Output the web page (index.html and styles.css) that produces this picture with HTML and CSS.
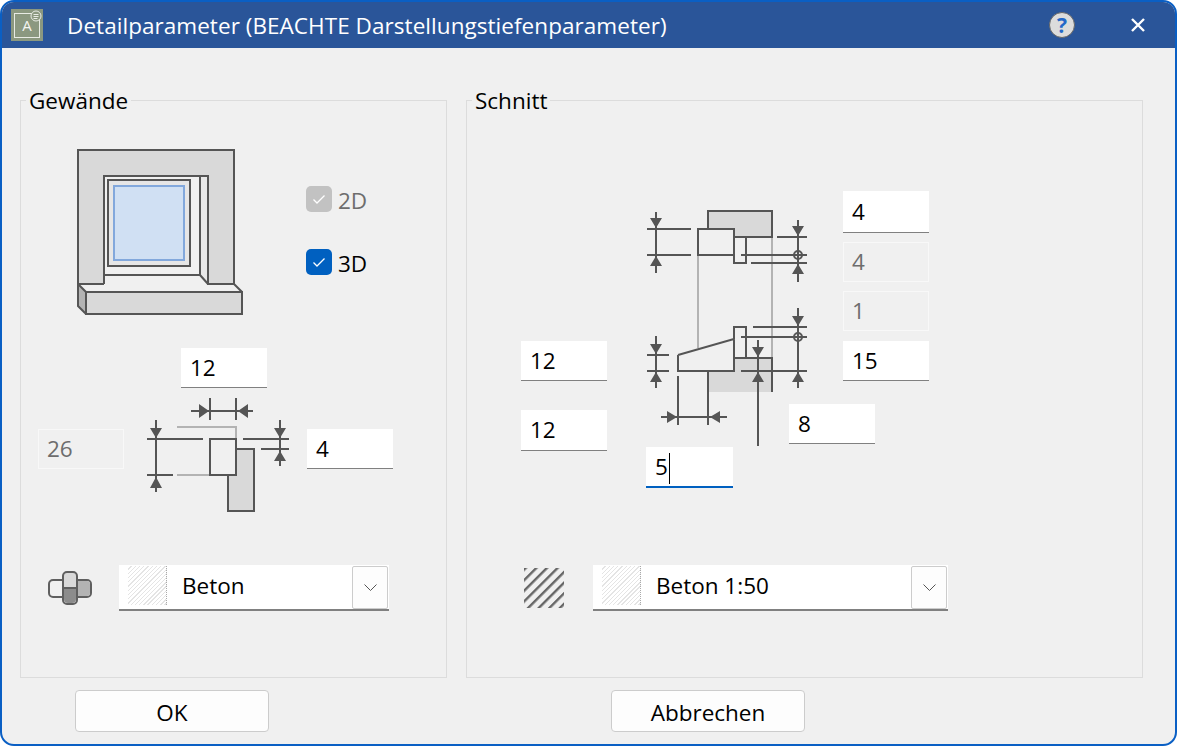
FILE: index.html
```html
<!DOCTYPE html>
<html lang="de">
<head>
    <meta charset="UTF-8">
    <meta name="viewport" content="width=device-width, initial-scale=1.0">
    <title>Detailparameter</title>
    <link rel="stylesheet" href="styles.css">
</head>
<body>
    <div class="window">
        <div class="titlebar">
            <div class="app-icon">
                <span class="app-letter">A</span>
                <svg class="app-badge" width="12" height="12" viewBox="0 0 12 12"><circle cx="6" cy="6" r="5" fill="#8b9880" stroke="#e8ebe4"/><path d="M3.5 4.5h5M3.5 6.5h5M3.5 8.500h4" stroke="#e8ebe4"/></svg>
            </div>
            <div class="title">Detailparameter (BEACHTE Darstellungstiefenparameter)</div>
            <div class="help"><span>?</span></div>
            <svg class="close" width="16" height="16" viewBox="0 0 16 16"><path d="M2 2 14 14M14 2 2 14" stroke="#fff" stroke-width="2.400"/></svg>
        </div>

        <div class="content">
            <div class="groups">
                <!-- Gewaende -->
                <div class="group group-left">
                    <div class="group-title">Gewände</div>

                    <div class="top-row">
                        <svg width="166" height="166" viewBox="77 149 166 166">
                            <path d="M78 150H234V284H78Z" fill="#d9d9d9"/>
                            <path d="M104 176H208V284H104Z" fill="#f0f0f0"/>
                            <path d="M200 176H208V284L200 275Z" fill="#e8e8e8"/>
                            <rect x="108" y="180" width="82" height="86" fill="#e6e6e6" stroke="#555" stroke-width="2"/>
                            <rect x="114" y="186" width="70" height="74" fill="#d0e0f3" stroke="#82a8dc" stroke-width="2"/>
                            <path d="M78 284H234L242 292H86Z" fill="#f0f0f0"/>
                            <g fill="none" stroke="#555" stroke-width="2">
                                <path d="M104 284V176H208V284H234V150H78V284H104"/>
                                <path d="M200 176V275L208 284M104 275H200"/>
                                <path d="M234 284 242 292H86"/>
                            </g>
                            <path d="M78 284 86 292V314L78 306Z" fill="#b3b3b3" stroke="#555" stroke-width="2"/>
                            <rect x="86" y="292" width="156" height="22" fill="#d9d9d9" stroke="#555" stroke-width="2"/>
                        </svg>
                        <div class="checks">
                            <div class="check disabled">
                                <span class="box"><svg width="14" height="14" viewBox="0 0 14 14"><path d="M1.500 7.500 5 11 12.500 3.500" fill="none" stroke="#fff" stroke-width="1.300"/></svg></span>
                                <span class="check-label">2D</span>
                            </div>
                            <div class="check">
                                <span class="box"><svg width="14" height="14" viewBox="0 0 14 14"><path d="M1.500 7.500 5 11 12.500 3.500" fill="none" stroke="#fff" stroke-width="1.300"/></svg></span>
                                <span class="check-label">3D</span>
                            </div>
                        </div>
                    </div>

                    <div class="dim-canvas left-canvas">
                        <svg class="dim-left" width="155" height="120" viewBox="140 395 155 120">
                            <g fill="none" stroke="#b3b3b3" stroke-width="2">
                                <path d="M177 427H236V439M177 475H210"/>
                            </g>
                            <rect x="228" y="449" width="26" height="62" fill="#d9d9d9" stroke="#555" stroke-width="2"/>
                            <rect x="210" y="439" width="26" height="36" fill="#f0f0f0" stroke="#555" stroke-width="2"/>
                            <g fill="none" stroke="#555" stroke-width="2">
                                <path d="M191 411H253M210 398V420M236 398V420"/>
                                <path d="M156 420V492M147 439H203M147 475H173"/>
                                <path d="M280 420V466M243 439H289M261 449H289"/>
                            </g>
                            <g fill="#555">
                                <path d="M199 404 209 411 199 418ZM248 404 238 411 248 418Z"/>
                                <path d="M150 428H162L156 438ZM150 488H162L156 477Z"/>
                                <path d="M274 428H286L280 438ZM274 461H286L280 451Z"/>
                            </g>
                        </svg>
                        <div class="field f-l1">12</div>
                        <div class="field disabled f-l2">26</div>
                        <div class="field f-l3">4</div>
                    </div>

                    <div class="combo-row left-combo-row">
                        <svg width="44" height="34" viewBox="48 570 44 34">
                            <rect x="49" y="579" width="42" height="17" rx="4" fill="#f0f0f0" stroke="#5f5f5f" stroke-width="2"/>
                            <path d="M76 580H87a3 3 0 0 1 3 3V592a3 3 0 0 1-3 3H76Z" fill="#b3b3b3"/>
                            <rect x="63" y="571" width="14" height="32" rx="4" fill="#d9d9d9" stroke="#5f5f5f" stroke-width="2"/>
                            <path d="M64 587H76V598a4 4 0 0 1-4 4H68a4 4 0 0 1-4-4Z" fill="#8c8c8c"/>
                            <path d="M64 587H76" stroke="#5f5f5f" stroke-width="2"/>
                        </svg>
                        <div class="combo combo-short">
                            <span class="swatch"></span>
                            <span class="combo-text">Beton</span>
                            <span class="drop"><svg width="13" height="8" viewBox="0 0 13 8"><path d="M.5.500 6.500 6.500 12.500.500" fill="none" stroke="#555"/></svg></span>
                        </div>
                    </div>
                </div>

                <!-- Schnitt -->
                <div class="group group-right">
                    <div class="group-title">Schnitt</div>

                    <div class="dim-canvas right-canvas">
                        <svg class="dim-right" width="175" height="245" viewBox="640 205 175 245">
                            <path d="M734 358H772V392H708V371H734Z" fill="#d9d9d9"/>
                            <g fill="none" stroke="#b3b3b3" stroke-width="2">
                                <path d="M698 255V348M772 237V358"/>
                            </g>
                            <rect x="708" y="211" width="64" height="26" fill="#d9d9d9" stroke="#555" stroke-width="2"/>
                            <rect x="698" y="229" width="36" height="26" fill="#f0f0f0" stroke="#555" stroke-width="2"/>
                            <g fill="none" stroke="#555" stroke-width="2">
                                <path d="M734 255V263H746V237"/>
                                <path d="M678 355 734 339V327H746V358M734 339V371H678V355"/>
                                <path d="M734 358H772V392M708 371V425M678 376V425M661 417H727"/>
                                <path d="M656 212V273M647 229H691M647 255H691"/>
                                <path d="M656 336V388M647 355H669M647 371H669"/>
                                <path d="M798 220V282M777 237H807M741 255H807M751 263H807"/>
                                <path d="M798 308V388M753 327H807M741 337H807M741 371H807"/>
                                <path d="M758 340V446"/>
                                <circle cx="798" cy="255" r="4"/>
                                <circle cx="798" cy="337" r="4"/>
                            </g>
                            <g fill="#555">
                                <path d="M650 218H662L656 228ZM650 266H662L656 256Z"/>
                                <path d="M650 344H662L656 354ZM650 382H662L656 372Z"/>
                                <path d="M792 226H804L798 236ZM792 274H804L798 264Z"/>
                                <path d="M792 316H804L798 326ZM792 382H804L798 372Z"/>
                                <path d="M752 347H764L758 357ZM752 382H764L758 372Z"/>
                                <path d="M667 411 677 417 667 423ZM720 411 710 417 720 423Z"/>
                            </g>
                        </svg>
                        <div class="field f-r1">4</div>
                        <div class="field disabled f-r2">4</div>
                        <div class="field disabled f-r3">1</div>
                        <div class="field f-r4">15</div>
                        <div class="field f-r5">12</div>
                        <div class="field f-r6">12</div>
                        <div class="field f-r7">8</div>
                        <div class="field focused f-r8">5<span class="caret"></span></div>
                    </div>

                    <div class="combo-row right-combo-row">
                        <svg width="40" height="40" viewBox="0 0 40 40">
                            <defs>
                                <pattern id="hatch" width="7.500" height="10" patternUnits="userSpaceOnUse" patternTransform="rotate(45)">
                                    <rect width="2.400" height="10" fill="#666"/>
                                </pattern>
                            </defs>
                            <rect width="40" height="40" fill="url(#hatch)"/>
                        </svg>
                        <div class="combo combo-long">
                            <span class="swatch"></span>
                            <span class="combo-text">Beton 1:50</span>
                            <span class="drop"><svg width="13" height="8" viewBox="0 0 13 8"><path d="M.5.500 6.500 6.500 12.500.500" fill="none" stroke="#555"/></svg></span>
                        </div>
                    </div>
                </div>
            </div>

            <div class="buttons">
                <button class="btn">OK</button>
                <button class="btn">Abbrechen</button>
            </div>
        </div>
    </div>
</body>
</html>
```

FILE: styles.css
```css
html, body {
    margin: 0;
    padding: 0;
    background: #fff;
}
body {
    font-family: "Open Sans", "Noto Sans", sans-serif;
    font-size: 22.5px;
    color: #000;
}
.window {
    box-sizing: border-box;
    width: 1177px;
    height: 746px;
    border: 2px solid #0a5fc4;
    border-radius: 14px;
    background: #f0f0f0;
    overflow: hidden;
    display: flex;
    flex-direction: column;
}
.titlebar {
    height: 46px;
    flex: none;
    background: #2a5599;
    color: #fff;
    display: flex;
    align-items: center;
    padding-left: 9px;
}
.app-icon {
    position: relative;
    box-sizing: border-box;
    width: 32px;
    height: 32px;
    background: #8b9880;
    display: flex;
    align-items: center;
    justify-content: center;
}
.app-icon::before {
    content: "";
    position: absolute;
    left: 3px;
    top: 4px;
    width: 26px;
    height: 25px;
    border: 1px solid #e8ebe4;
    box-sizing: border-box;
}
.app-letter {
    font-size: 15px;
    color: #f4f4f0;
}
.app-badge {
    position: absolute;
    top: 1px;
    right: 1px;
}
.title {
    margin-left: 24px;
    padding-top: 1px;
    flex: 1;
    white-space: nowrap;
    letter-spacing: .05px;
}
.help {
    box-sizing: border-box;
    width: 26px;
    height: 26px;
    border-radius: 50%;
    background: #dcdcdc;
    border: 1px solid #666;
    display: flex;
    align-items: center;
    justify-content: center;
    color: #2468c8;
    font-weight: 700;
    font-size: 21px;
    margin-right: 55px;
}
.close {
    margin-right: 29px;
}

.content {
    flex: 1;
    display: flex;
    flex-direction: column;
    padding: 52px 32px 12px 18px;
}
.groups {
    display: flex;
    gap: 19px;
}
.group {
    position: relative;
    box-sizing: border-box;
    height: 578px;
    border: 1px solid #dcdcdc;
}
.group-left {
    width: 427px;
}
.group-right {
    width: 677px;
}
.group-title {
    position: absolute;
    left: 5px;
    top: -14px;
    padding: 0 3px;
    line-height: 28px;
    background: #f0f0f0;
}

.top-row {
    display: flex;
    padding: 48px 0 0 56px;
}
.checks {
    margin: 37px 0 0 63px;
    display: flex;
    flex-direction: column;
    gap: 37px;
}
.check {
    display: flex;
    align-items: center;
    gap: 6px;
    height: 26px;
}
.check-label {
    padding-top: 2px;
}
.check.disabled {
    color: #6d6d6d;
}
.box {
    box-sizing: border-box;
    width: 26px;
    height: 26px;
    border-radius: 5px;
    background: #0060c0;
    display: flex;
    align-items: center;
    justify-content: center;
}
.check.disabled .box {
    background: #c2c2c2;
}

/* dimension drawings: inputs sit at their place on the drawing */
.dim-canvas {
    position: relative;
}
.left-canvas {
    height: 170px;
    margin-top: 33px;
}
.right-canvas {
    height: 297px;
    margin-top: 90px;
}
.dim-left {
    position: absolute;
    left: 119px;
    top: 47px;
}
.dim-right {
    position: absolute;
    left: 173px;
    top: 14px;
}
.field {
    position: absolute;
    box-sizing: border-box;
    width: 86px;
    height: 40px;
    background: #fff;
    border-bottom: 1px solid #808080;
    padding-left: 9px;
    line-height: 39px;
}
.field.disabled {
    background: #f0f0f0;
    border: 1px solid #f8f8f8;
    color: #6d6d6d;
    padding-left: 8px;
    line-height: 38px;
}
.field.focused {
    border-bottom: 2px solid #0060c0;
    height: 41px;
    width: 87px;
}
.caret {
    display: inline-block;
    width: 1px;
    height: 31px;
    margin-left: 1px;
    background: #000;
    vertical-align: middle;
}
.f-l1 { left: 160px; top: 0; }
.f-l2 { left: 17px; top: 81px; }
.f-l3 { left: 286px; top: 81px; }
.f-r1 { left: 376px; top: 0; height: 42px; line-height: 41px; }
.f-r2 { left: 376px; top: 51px; }
.f-r3 { left: 376px; top: 100px; }
.f-r4 { left: 376px; top: 150px; }
.f-r5 { left: 54px; top: 150px; }
.f-r6 { left: 54px; top: 219px; height: 41px; }
.f-r7 { left: 322px; top: 213px; }
.f-r8 { left: 179px; top: 256px; }

.combo-row {
    display: flex;
    align-items: center;
}
.left-combo-row {
    margin-top: 47px;
    padding-left: 27px;
    gap: 27px;
}
.right-combo-row {
    margin-top: 77px;
    padding-left: 57px;
    gap: 29px;
}
.combo {
    box-sizing: border-box;
    height: 46px;
    background: #fff;
    border-bottom: 2px solid #808080;
    display: flex;
    align-items: flex-start;
    padding: 1px 1px 0 9px;
}
.combo-short {
    width: 270px;
}
.combo-long {
    width: 355px;
}
.swatch {
    box-sizing: border-box;
    width: 39px;
    height: 39px;
    border-right: 1px dotted #aaa;
    background: repeating-linear-gradient(135deg, #fff 0 2px, #e4e4e4 2px 3px);
}
.combo-text {
    flex: 1;
    margin-left: 15px;
    line-height: 40px;
}
.drop {
    box-sizing: border-box;
    width: 36px;
    height: 43px;
    border: 1px solid #ccc;
    border-radius: 2px;
    background: #fdfdfd;
    display: flex;
    align-items: center;
    justify-content: center;
}

.buttons {
    display: flex;
    padding-left: 55px;
    gap: 342px;
    margin-top: 12px;
}
.btn {
    box-sizing: border-box;
    width: 194px;
    height: 42px;
    background: #fdfdfd;
    border: 1px solid #ccc;
    border-radius: 4px;
    font: inherit;
    color: #000;
    padding: 2px 0 0;
}
```
